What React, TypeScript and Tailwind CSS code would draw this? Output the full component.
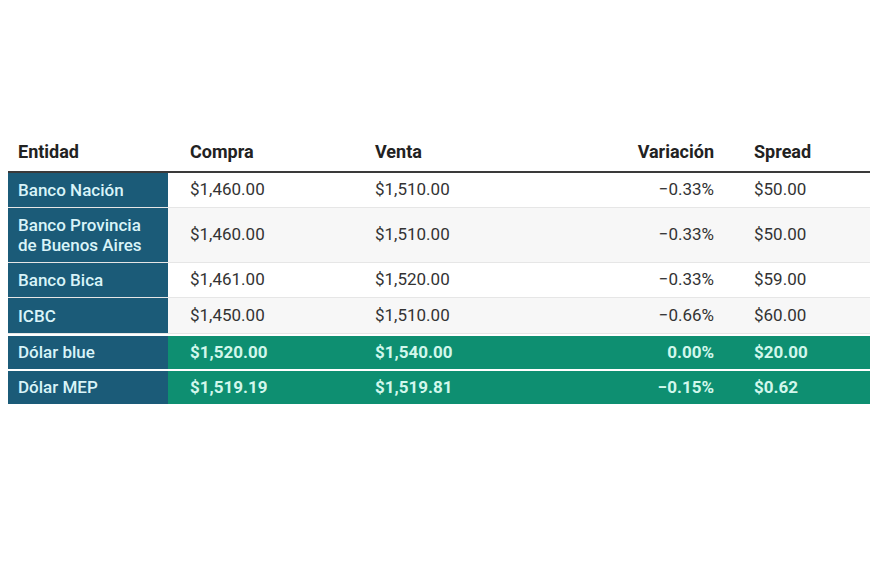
const rows = [
  { name: 'Banco Nación', compra: '$1,460.00', venta: '$1,510.00', variacion: '−0.33%', spread: '$50.00' },
  { name: 'Banco Provincia de Buenos Aires', compra: '$1,460.00', venta: '$1,510.00', variacion: '−0.33%', spread: '$50.00' },
  { name: 'Banco Bica', compra: '$1,461.00', venta: '$1,520.00', variacion: '−0.33%', spread: '$59.00' },
  { name: 'ICBC', compra: '$1,450.00', venta: '$1,510.00', variacion: '−0.66%', spread: '$60.00' },
];

const highlights = [
  { name: 'Dólar blue', compra: '$1,520.00', venta: '$1,540.00', variacion: '0.00%', spread: '$20.00' },
  { name: 'Dólar MEP', compra: '$1,519.19', venta: '$1,519.81', variacion: '−0.15%', spread: '$0.62' },
];

const cols = 'grid grid-cols-[160px_185px_187px_194px_1fr]';

const App = () => {
  return (
    <div
      className="w-[870px] h-[578px] overflow-hidden bg-white pt-[132px] pl-[8px]"
      style={{ fontFamily: 'Roboto, "Liberation Sans", sans-serif' }}
    >
      <div className="w-[862px]">
        <div className={`${cols} h-[41px] items-center border-b-2 border-[#3a3a3a] text-[18px] font-bold text-[#222]`}>
          <div className="pl-[10px]">Entidad</div>
          <div className="pl-[22px]">Compra</div>
          <div className="pl-[22px]">Venta</div>
          <div className="pr-[20px] text-right">Variación</div>
          <div className="pl-[20px]">Spread</div>
        </div>

        {rows.map((r, i) => (
          <div
            key={r.name}
            className={`${cols} text-[17px] text-[#333] border-b border-[#e6e6e6] ${i % 2 ? 'bg-[#f7f7f7]' : 'bg-white'}`}
          >
            <div
              className={`flex items-center bg-[#1b5b78] text-[#d9f4f8] font-medium leading-[20px] pl-[10px] pr-[8px] py-[7px] ${i === 3 ? 'min-h-[35px]' : 'min-h-[34px]'}`}
            >
              <span className={i === 1 ? 'w-[130px]' : ''}>{r.name}</span>
            </div>
            <div className="flex items-center pl-[22px]">{r.compra}</div>
            <div className="flex items-center pl-[22px]">{r.venta}</div>
            <div className="flex items-center justify-end pr-[20px]">{r.variacion}</div>
            <div className="flex items-center pl-[20px]">{r.spread}</div>
          </div>
        ))}

        {highlights.map((r) => (
          <div key={r.name} className={`${cols} mt-[2px] h-[33px] text-[17px] font-bold text-[#d2f7ec] bg-[#0e8f71]`}>
            <div className="flex items-center bg-[#1b5b78] text-[#d9f4f8] font-medium pl-[10px]">{r.name}</div>
            <div className="flex items-center pl-[22px]">{r.compra}</div>
            <div className="flex items-center pl-[22px]">{r.venta}</div>
            <div className="flex items-center justify-end pr-[20px]">{r.variacion}</div>
            <div className="flex items-center pl-[20px]">{r.spread}</div>
          </div>
        ))}
      </div>
    </div>
  );
};

export default App;
